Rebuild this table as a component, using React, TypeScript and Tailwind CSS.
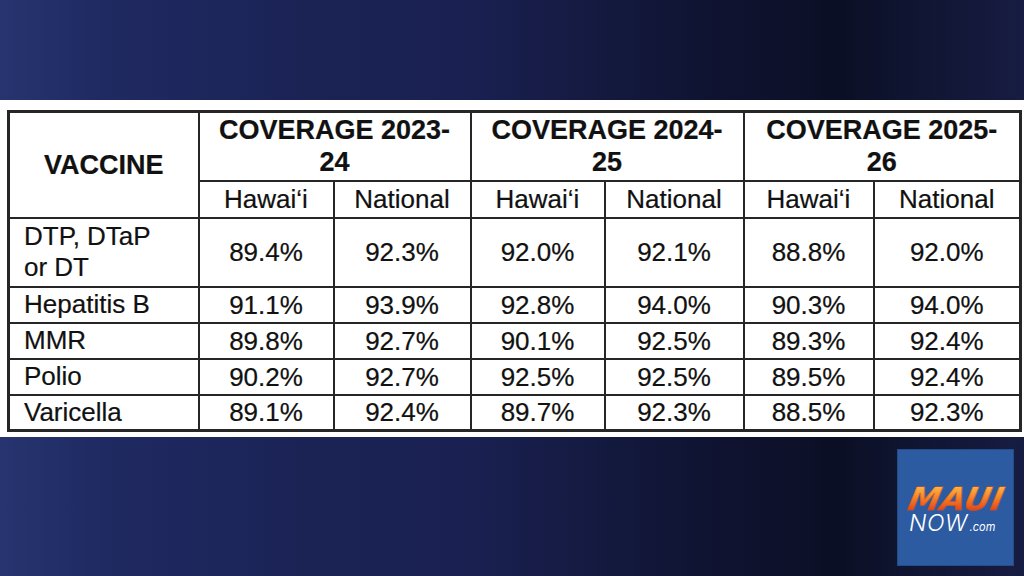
const rows = [
  { name: "DTP, DTaP", name2: "or DT", values: ["89.4%", "92.3%", "92.0%", "92.1%", "88.8%", "92.0%"] },
  { name: "Hepatitis B", values: ["91.1%", "93.9%", "92.8%", "94.0%", "90.3%", "94.0%"] },
  { name: "MMR", values: ["89.8%", "92.7%", "90.1%", "92.5%", "89.3%", "92.4%"] },
  { name: "Polio", values: ["90.2%", "92.7%", "92.5%", "92.5%", "89.5%", "92.4%"] },
  { name: "Varicella", values: ["89.1%", "92.4%", "89.7%", "92.3%", "88.5%", "92.3%"] },
];

const seasons = [
  { a: "COVERAGE 2023-", b: "24" },
  { a: "COVERAGE 2024-", b: "25" },
  { a: "COVERAGE 2025-", b: "26" },
];

function Logo() {
  return (
    <div className="w-[117px] h-[117px] bg-[#2d5ba2] border border-[#264c88] flex flex-col items-center justify-center">
      <div className="flex flex-col items-start pl-[2px] mt-[6px]">
        <span className="text-[32px] leading-[24px] font-black italic tracking-[0.5px] -skew-x-12 font-['DejaVu_Sans',sans-serif] bg-gradient-to-b from-[#fcb445] via-[#f47b26] to-[#df3f1a] bg-clip-text text-transparent [-webkit-text-stroke:0.5px_#c8501c]">
          MAUI
        </span>
        <div className="flex items-end text-white font-['Inter',sans-serif] italic leading-none mt-[1px]">
          <span className="text-[23px] font-light tracking-[0.5px] pr-[2px]">NOW</span>
          <span className="text-[11px] font-normal mb-[2px]">.com</span>
        </div>
      </div>
    </div>
  );
}

export default function App() {
  const cell = "border-2 border-[#262626] text-center align-middle";
  return (
    <div className="w-[1024px] h-[576px] flex flex-col bg-[linear-gradient(90deg,#27346f_0%,#1f2a62_10%,#1b2355_30%,#1a2152_45%,#141a40_58%,#0f1331_70%,#0b0f25_82%,#0f1430_88%,#171c42_100%)] font-['Liberation_Sans',Arial,sans-serif] text-[#111]">
      <div className="h-[100px]" />
      <div className="h-[337px] bg-white pt-[10px] pl-[7px]">
        <table className="w-[1012px] h-[319px] table-fixed border-collapse border-[3px] border-[#262626] [-webkit-text-stroke:0.2px_#111]">
          <colgroup>
            <col className="w-[190px]" />
            <col className="w-[135px]" />
            <col className="w-[137px]" />
            <col className="w-[134px]" />
            <col className="w-[139px]" />
            <col className="w-[130px]" />
            <col className="w-[147px]" />
          </colgroup>
          <thead>
            <tr className="h-[69px]">
              <th rowSpan={2} className={`${cell} text-[27px] font-bold`}>VACCINE</th>
              {seasons.map((s) => (
                <th key={s.a} colSpan={2} className={`${cell} text-[27px] font-bold leading-[32px]`}>
                  {s.a}
                  <br />
                  {s.b}
                </th>
              ))}
            </tr>
            <tr className="h-[37px]">
              {seasons.map((s) => (
                <>
                  <th key={s.a + "h"} className={`${cell} text-[26px] font-normal leading-[30px]`}>Hawai‘i</th>
                  <th key={s.a + "n"} className={`${cell} text-[26px] font-normal leading-[30px]`}>National</th>
                </>
              ))}
            </tr>
          </thead>
          <tbody>
            {rows.map((r, i) => (
              <tr key={r.name} className={i === 0 ? "h-[69px]" : "h-[36px]"}>
                <td className="border-2 border-[#262626] text-left align-middle pl-[14px] text-[26px] leading-[31px]">
                  {r.name}
                  {r.name2 && (
                    <>
                      <br />
                      {r.name2}
                    </>
                  )}
                </td>
                {r.values.map((v, j) => (
                  <td key={j} className={`${cell} text-[26px] leading-[30px]`}>{v}</td>
                ))}
              </tr>
            ))}
          </tbody>
        </table>
      </div>
      <div className="flex-1 flex justify-end pt-[12px] pr-[10px]">
        <Logo />
      </div>
    </div>
  );
}
